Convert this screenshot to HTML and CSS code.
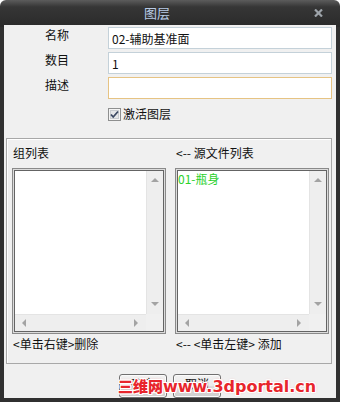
FILE: index.html
```html
<!DOCTYPE html>
<html lang="zh">
    <head>
        <meta charset="UTF-8" />
        <meta name="viewport" content="width=device-width, initial-scale=1.0" />
        <title>图层</title>
        <link rel="stylesheet" href="styles.css">
    </head>
    <body>
        <div class="window">
            <div class="titlebar">
                <span class="title">图层</span>
                <svg class="close" width="9" height="8" viewBox="0 0 9 8">
                    <path d="M1 0.5 L8 7.5 M8 0.5 L1 7.5" stroke="#9ea4aa" stroke-width="2.2" />
                </svg>
            </div>

            <div class="body">
                <div class="form">
                    <label class="lbl">名称</label>
                    <input class="txt" type="text" value="02-辅助基准面" />
                    <label class="lbl">数目</label>
                    <input class="txt" type="text" value="1" />
                    <label class="lbl">描述</label>
                    <input class="txt focus" type="text" value="" />
                </div>

                <div class="check">
                    <svg class="box" width="13" height="13" viewBox="0 0 13 13">
                        <rect x="0.5" y="0.5" width="12" height="12" fill="#f4f4f4" stroke="#8e8f8f" />
                        <rect x="2.5" y="2.5" width="8" height="8" fill="#e4e6e8" stroke="#c8ccd0" />
                        <path d="M3 6.5 L5.2 9 L10 3.5" fill="none" stroke="#3c4a64" stroke-width="1.8" />
                    </svg>
                    <span>激活图层</span>
                </div>

                <!-- 组 / 源文件 -->
                <div class="group">
                    <div class="col">
                        <div class="head">组列表</div>
                        <div class="list">
                            <div class="list-in">
                                <div class="items"></div>
                                <div class="vbar"><i class="up"></i><i class="down"></i></div>
                                <div class="hbar"><i class="left"></i><i class="right"></i></div>
                                <div class="corner"></div>
                            </div>
                        </div>
                        <div class="foot">&lt;单击右键&gt;删除</div>
                    </div>
                    <div class="col">
                        <div class="head">&lt;-- 源文件列表</div>
                        <div class="list">
                            <div class="list-in">
                                <div class="items"><div class="item">01-瓶身</div></div>
                                <div class="vbar"><i class="up"></i><i class="down"></i></div>
                                <div class="hbar"><i class="left"></i><i class="right"></i></div>
                                <div class="corner"></div>
                            </div>
                        </div>
                        <div class="foot">&lt;-- &lt;单击左键&gt; 添加</div>
                    </div>
                </div>

                <div class="buttons">
                    <button class="btn">确定</button>
                    <button class="btn">取消</button>
                </div>
            </div>

            <div class="watermark"><span class="wm-cn">三维网</span><span class="wm-en">www.3dportal.cn</span></div>
        </div>
    </body>
</html>
```

FILE: styles.css
```css
body {
    margin: 0;
    background: #ffffff;
    font-family: "Noto Sans CJK SC", "Liberation Sans", sans-serif;
    font-size: 12px;
    color: #111;
}
.window {
    width: 340px;
    height: 402px;
    border-radius: 6px 6px 0 0;
    background: linear-gradient(#5c5c5c, #363636 7px, #2a2a2a 27px, #303030 27px);
    display: flex;
    flex-direction: column;
    position: relative;
    overflow: hidden;
}
.titlebar {
    height: 27px;
    display: flex;
    align-items: center;
}
.title {
    flex: 1;
    text-align: center;
    color: #b8cbe6;
    font-size: 13px;
    line-height: 16px;
}
.close {
    margin-right: 17px;
}
.body {
    flex: 1;
    margin: 0 4px 4px 4px;
    background: #f0f0f0;
    display: flex;
    flex-direction: column;
}
.form {
    display: grid;
    grid-template-columns: 104px 224px;
    row-gap: 3px;
    padding-top: 2px;
}
.lbl {
    padding-left: 41px;
    line-height: 16px;
    align-self: start;
}
.txt {
    box-sizing: border-box;
    height: 22px;
    margin: 0;
    border: 1px solid #c4d1d9;
    padding: 0 3px;
    background: #fff;
    font-family: inherit;
    font-size: 12px;
    color: #111;
    outline: none;
}
.txt.focus {
    border-color: #e6c383;
}
.check {
    margin-top: 7px;
    padding-left: 104px;
    display: flex;
    align-items: center;
    line-height: 16px;
}
.check span {
    margin-left: 2px;
}
.group {
    box-sizing: border-box;
    margin: 16px 0 0 2px;
    width: 326px;
    height: 226px;
    border: 1px solid #a8a8a8;
    box-shadow: inset 1px 1px 0 #fff;
    padding: 0 2px 0 5px;
    display: flex;
    gap: 9px;
}
.col {
    width: 154px;
    display: flex;
    flex-direction: column;
}
.head {
    line-height: 16px;
    margin: 6px 0 7px;
    padding-left: 1px;
}
.list {
    height: 166px;
    box-sizing: border-box;
    border: 1px solid #8a8a8a;
    padding: 1px;
    background: #dcdcdc;
}
.list-in {
    height: 100%;
    box-sizing: border-box;
    border: 1px solid #646464;
    background: #fff;
    display: grid;
    grid-template-columns: 1fr 17px;
    grid-template-rows: 1fr 17px;
}
.items {
    overflow: hidden;
}
.item {
    color: #2bd12b;
    line-height: 16px;
}
.vbar {
    background: #eeeeee;
    border-left: 1px solid #e4e4e4;
    display: flex;
    flex-direction: column;
    justify-content: space-between;
    align-items: center;
    padding: 7px 0 8px;
}
.hbar {
    background: #eeeeee;
    border-top: 1px solid #e4e4e4;
    display: flex;
    justify-content: space-between;
    align-items: center;
    padding: 0 8px 0 7px;
}
.corner {
    background: #f0f0f0;
}
.up, .down, .left, .right {
    width: 0;
    height: 0;
    border: 4px solid transparent;
}
.up {
    border-bottom: 4px solid #a3a3a3;
    border-top-width: 0;
}
.down {
    border-top: 4px solid #a3a3a3;
    border-bottom-width: 0;
}
.left {
    border-right: 4px solid #a3a3a3;
    border-left-width: 0;
}
.right {
    border-left: 4px solid #a3a3a3;
    border-right-width: 0;
}
.foot {
    line-height: 16px;
    margin-top: 2px;
    padding-left: 1px;
}
.buttons {
    margin-top: 10px;
    display: flex;
    justify-content: center;
    gap: 6px;
}
.btn {
    width: 48px;
    height: 24px;
    margin: 0;
    padding: 0 0 4px;
    border: 1px solid #707070;
    border-radius: 3px;
    background: linear-gradient(#f2f2f2, #ebebeb 50%, #dddddd 51%, #cfcfcf);
    box-shadow: inset 0 0 0 1px #fbfbfb;
    font-family: inherit;
    font-size: 12px;
    line-height: 16px;
    color: #111;
}
/* 水印 */
.watermark {
    position: absolute;
    left: 118px;
    top: 377px;
    line-height: 18px;
    color: #e8252c;
    font-weight: bold;
    white-space: nowrap;
    text-shadow: 1px 0 0 #fff, -1px 0 0 #fff, 0 1px 0 #fff, 0 -1px 0 #fff,
        1px 1px 0 #fff, -1px -1px 0 #fff, 1px -1px 0 #fff, -1px 1px 0 #fff,
        0 0 3px #f2a0a0;
}
.wm-cn {
    font-family: "Noto Sans CJK SC", sans-serif;
    font-size: 15px;
    font-weight: 900;
}
.wm-en {
    font-family: "DejaVu Sans", sans-serif;
    font-size: 16px;
}
```
